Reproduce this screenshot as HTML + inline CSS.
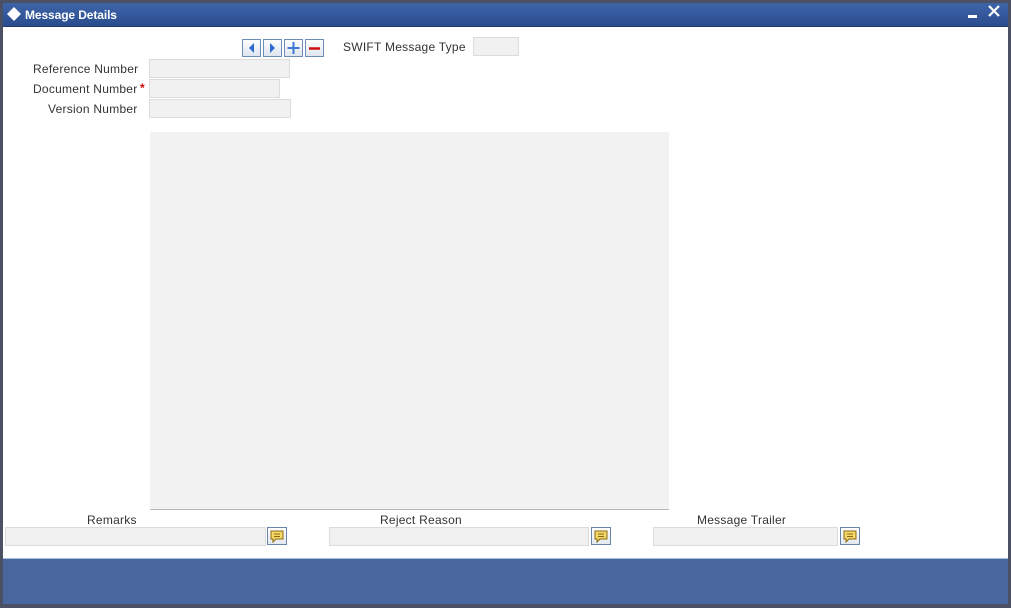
<!DOCTYPE html>
<html><head><style>
*{margin:0;padding:0;box-sizing:border-box}
body{width:1011px;height:608px;background:#4b5064;position:relative;overflow:hidden;font-family:"Liberation Sans",Arial,sans-serif;font-size:12px;color:#333}
.title{position:absolute;left:3px;top:3px;width:1005px;height:24px;background:linear-gradient(#3e64a8,#2a4d8f);border-bottom:1px solid #1e3a70}
.title span{position:absolute;left:22px;top:5px;color:#fff;font-weight:bold;font-size:12px;letter-spacing:-0.1px}
.body{position:absolute;left:3px;top:27px;width:1005px;height:531px;background:#fff}
.foot{position:absolute;left:3px;top:558px;width:1005px;height:46px;background:#49679f;border-top:1px solid #a9bedc}
.lbl{position:absolute;font-size:12px;color:#333;white-space:nowrap;letter-spacing:0.25px}
.inp{position:absolute;background:#f1f1f1;border:1px solid #dcdcdc;height:19px}
.btn{position:absolute;top:39px;width:19px;height:18px;border:1px solid #6d8cb8;background:linear-gradient(#fdfdfd,#dfe6f0)}
.ic{position:absolute;width:20px;height:18px;border:1px solid #6a84a8;background:linear-gradient(#fff,#e4e9f0)}
</style></head><body>
<div class="title">
<svg style="position:absolute;left:3px;top:3px" width="16" height="16"><path d="M8 1 L15 8 L8 15 L1 8Z" fill="#fff"/></svg>
<span>Message Details</span>
<div style="position:absolute;left:965px;top:12px;width:9px;height:3px;background:#fff"></div>
<svg style="position:absolute;left:985px;top:2px" width="12" height="12"><path d="M1 1L11 11M11 1L1 11" stroke="#fff" stroke-width="2.2"/></svg>
</div>
<div class="body"></div>
<div class="btn" style="left:242px"><svg width="17" height="16"><path d="M6 8L11 3V13Z" fill="#2d6ad0"/></svg></div>
<div class="btn" style="left:263px"><svg width="17" height="16"><path d="M11 8L6 3V13Z" fill="#2d6ad0"/></svg></div>
<div class="btn" style="left:284px"><svg width="17" height="16"><path d="M8.5 2V14M2.5 8H14.5" stroke="#3b78d8" stroke-width="2"/></svg></div>
<div class="btn" style="left:305px"><svg width="17" height="16"><path d="M3 8.5H14" stroke="#d01010" stroke-width="2.5"/></svg></div>
<div class="lbl" style="left:343px;top:40px">SWIFT Message Type</div>
<div class="inp" style="left:473px;top:37px;width:46px"></div>
<div class="lbl" style="left:33px;top:62px">Reference Number</div>
<div class="inp" style="left:149px;top:59px;width:141px"></div>
<div class="lbl" style="left:33px;top:82px">Document Number</div>
<div class="lbl" style="left:140px;top:81px;color:#c00;font-weight:bold">*</div>
<div class="inp" style="left:149px;top:79px;width:131px"></div>
<div class="lbl" style="left:48px;top:102px">Version Number</div>
<div class="inp" style="left:149px;top:99px;width:142px"></div>
<div style="position:absolute;left:150px;top:132px;width:519px;height:378px;background:#f2f2f2;border-bottom:1px solid #b8b8b8"></div>
<div class="lbl" style="left:87px;top:513px">Remarks</div>
<div class="lbl" style="left:380px;top:513px">Reject Reason</div>
<div class="lbl" style="left:697px;top:513px">Message Trailer</div>
<div class="inp" style="left:5px;top:527px;width:261px"></div>
<div class="inp" style="left:329px;top:527px;width:260px"></div>
<div class="inp" style="left:653px;top:527px;width:185px"></div>
<div class="ic" style="left:267px;top:527px"><svg width="18" height="16"><path d="M3 3H15V11H8L5 14V11H3Z" fill="#f5d86a" stroke="#8a6a10"/><path d="M6 6H12M6 8.5H12" stroke="#8a6a10"/></svg></div>
<div class="ic" style="left:591px;top:527px"><svg width="18" height="16"><path d="M3 3H15V11H8L5 14V11H3Z" fill="#f5d86a" stroke="#8a6a10"/><path d="M6 6H12M6 8.5H12" stroke="#8a6a10"/></svg></div>
<div class="ic" style="left:840px;top:527px"><svg width="18" height="16"><path d="M3 3H15V11H8L5 14V11H3Z" fill="#f5d86a" stroke="#8a6a10"/><path d="M6 6H12M6 8.5H12" stroke="#8a6a10"/></svg></div>
<div class="foot"></div>
</body></html>
